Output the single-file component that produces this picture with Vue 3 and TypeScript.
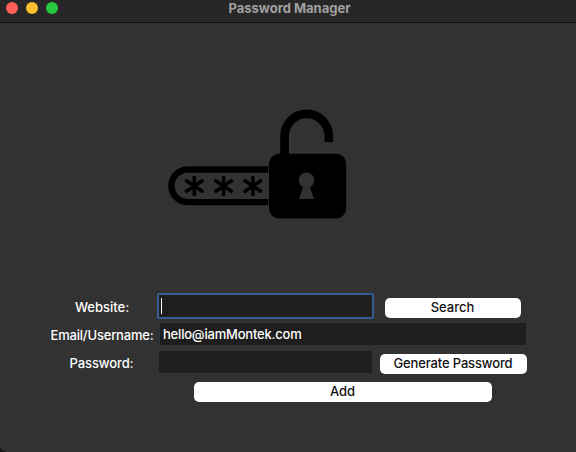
<script setup lang="ts">
import { ref } from 'vue'

const email = ref('hello@iamMontek.com')
const password = ref('')
const lights: string[] = ['close', 'minimize', 'zoom']
const asterisks: number[] = [194.3, 223.6, 252.9]
</script>

<template>
  <div class="window">
    <header class="titlebar">
      <div class="lights">
        <span v-for="l in lights" :key="l" class="light" :class="l"></span>
      </div>
      <h1 class="title">Password Manager</h1>
    </header>

    <main class="content">
      <svg class="logo" width="200" height="130" viewBox="160 100 200 130" fill="none" stroke="#000">
        <path d="M268.4 169.5H187.7a16.3 16.3 0 0 0 0 32.6H268.4" stroke-width="6.4" />
        <g v-for="x in asterisks" :key="x" :transform="`translate(${x} 186)`" stroke-width="3.5">
          <path d="M0 -10V10M-9 -6L9 6M-9 6L9 -6" />
        </g>
        <path d="M284.6 160V136a22.1 22.1 0 0 1 44.2 0V142" stroke-width="8.6" />
        <rect x="269" y="153.7" width="77.2" height="64.8" rx="10" fill="#000" stroke="none" />
        <path
          d="M303 187.2A7.8 7.8 0 1 1 310 187.2L314 199H299Z"
          fill="#323232"
          stroke="none"
        />
      </svg>

      <form class="form" @submit.prevent>
        <div class="row website">
          <label class="label">Website:</label>
          <div class="field focused"><span class="caret"></span></div>
          <button type="button" class="btn search">Search</button>
        </div>
        <div class="row email">
          <label class="label">Email/Username:</label>
          <input v-model="email" class="field" type="text" />
        </div>
        <div class="row password">
          <label class="label">Password:</label>
          <input v-model="password" class="field" type="password" />
          <button type="button" class="btn generate">Generate Password</button>
        </div>
        <button type="button" class="btn add">Add</button>
      </form>
    </main>
  </div>
</template>

<style>
body {
  background: #151515;
}
</style>

<style scoped>
.window {
  width: 576px;
  height: 452px;
  box-sizing: border-box;
  overflow: hidden;
  border-bottom-left-radius: 7px;
  background: #323232;
  color: #fff;
  font-family: Inter, 'Liberation Sans', sans-serif;
  font-size: 13px;
  font-weight: 450;
}
.titlebar {
  display: grid;
  grid-template-columns: 120px 1fr 117px;
  height: 23px;
  box-sizing: border-box;
  background: #272727;
  border-bottom: 1px solid #111;
}
.lights {
  display: flex;
  gap: 8px;
  padding: 2px 0 0 6px;
}
.light {
  width: 12px;
  height: 12px;
  border-radius: 50%;
}
.close {
  background: #ff5f57;
}
.minimize {
  background: #febc2e;
}
.zoom {
  background: #28c840;
}
.title {
  margin: 0;
  text-align: center;
  font-size: 13px;
  line-height: 16px;
  font-weight: 700;
  color: #a0a0a0;
}
.content {
  padding-top: 77px;
}
.logo {
  display: block;
  margin-left: 160px;
}
.form {
  padding-top: 63px;
}
.row {
  display: flex;
  align-items: flex-start;
}
.label {
  box-sizing: border-box;
  flex: none;
  line-height: 16px;
  text-align: center;
  white-space: nowrap;
}
.field {
  box-sizing: border-box;
  flex: none;
  height: 22px;
  margin: 0;
  padding: 0 3px 1px;
  border: 0;
  border-radius: 0;
  outline: 0;
  background: #1e1e1e;
  color: #fff;
  font: inherit;
}
.website {
  height: 30px;
}
.website .label,
.password .label {
  width: 157px;
  padding: 6px 0 0 47px;
}
.focused {
  width: 217px;
  height: 26px;
  padding: 3px 2px;
  border: 2px solid #335f96;
  border-radius: 2px;
}
.caret {
  display: block;
  width: 1px;
  height: 16px;
  background: #fff;
}
.email {
  height: 28px;
}
.email .label {
  width: 160px;
  padding: 4px 0 0 44px;
  letter-spacing: -0.2px;
}
.email .field {
  width: 366px;
  letter-spacing: -0.2px;
}
.password {
  height: 31px;
}
.password .label {
  width: 159px;
  padding: 4px 0 0 44px;
  letter-spacing: -0.12px;
}
.password .field {
  width: 213px;
}
.btn {
  display: block;
  flex: none;
  height: 20px;
  padding: 0 1px 2px 0;
  border: 0;
  border-radius: 5px;
  background: #fff;
  color: #111;
  font: inherit;
  line-height: 18px;
}
.search {
  width: 136px;
  margin: 5px 0 0 11px;
}
.generate {
  width: 147px;
  margin: 3px 0 0 8px;
  letter-spacing: -0.15px;
}
.add {
  width: 298px;
  margin-left: 194px;
}
</style>
